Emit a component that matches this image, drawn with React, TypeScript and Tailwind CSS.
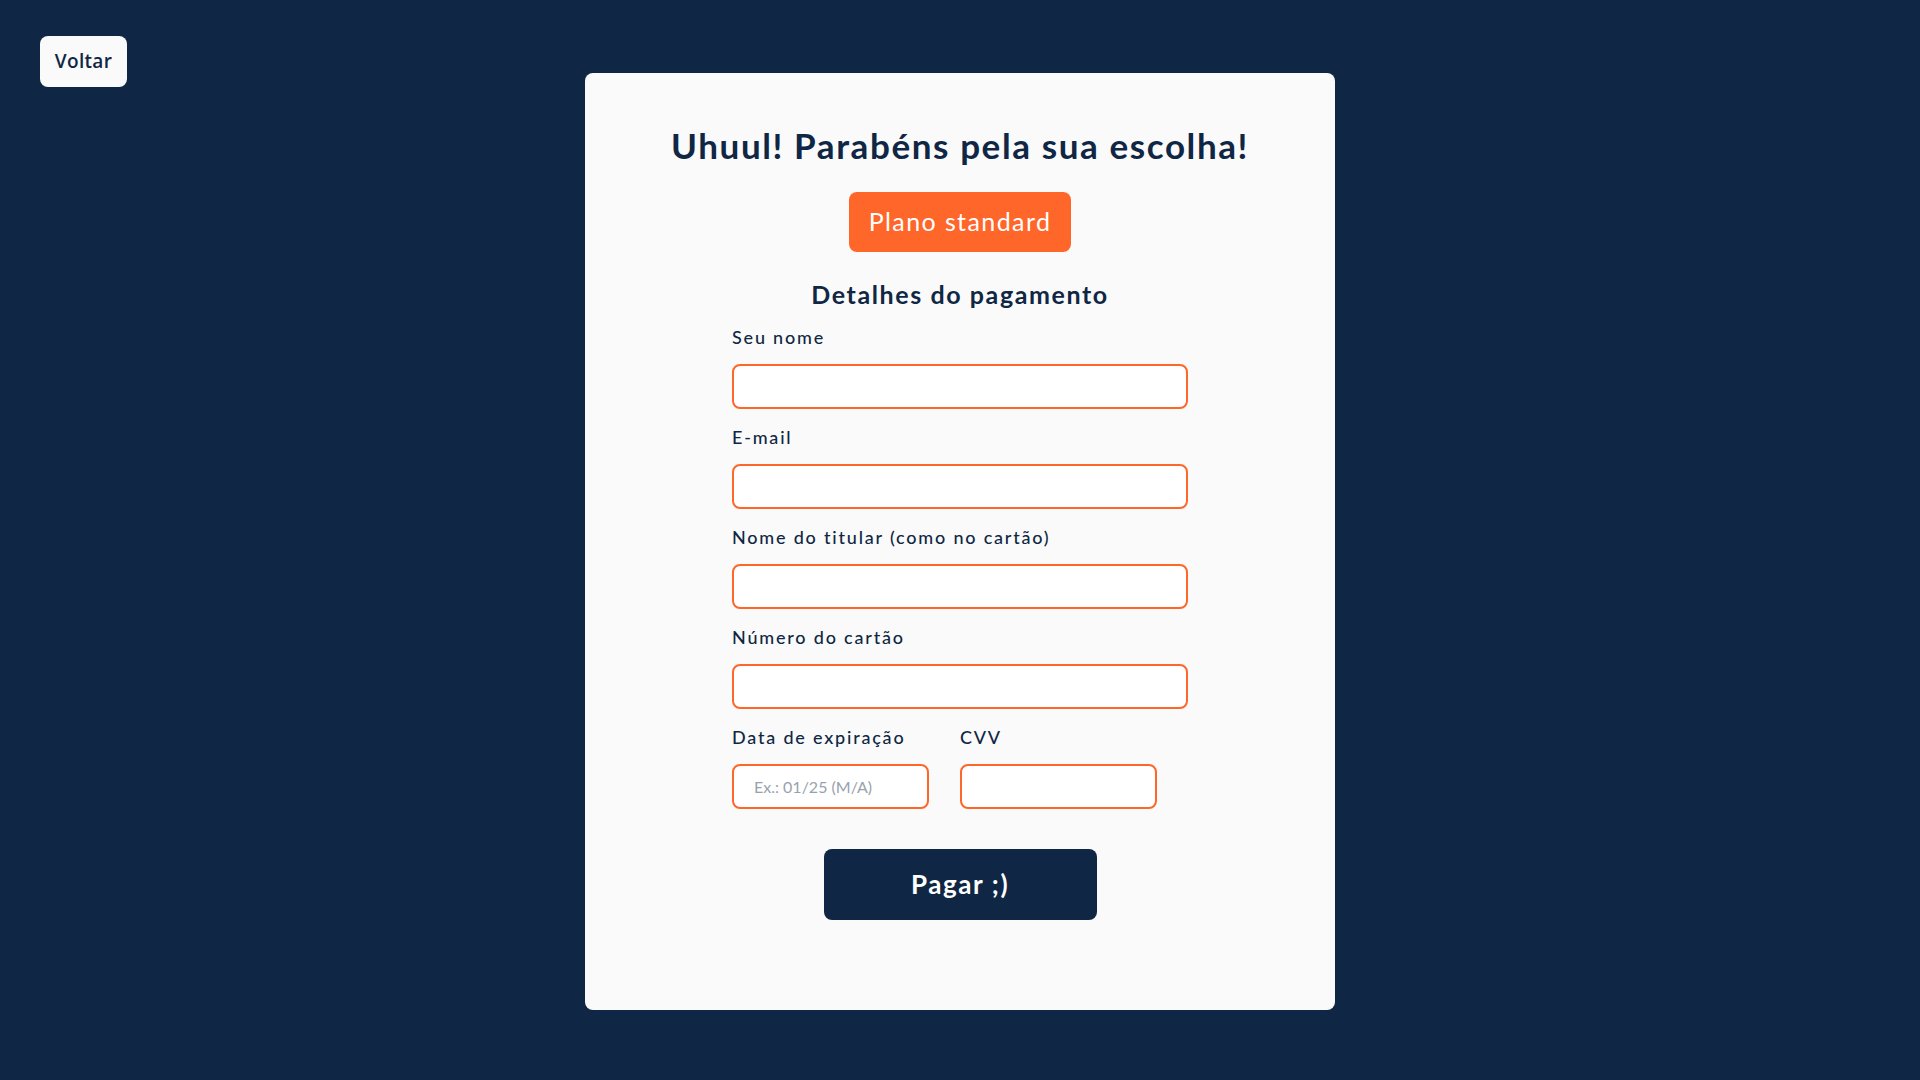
import { useState } from 'react'

const fields = [
  { id: 'nome', label: 'Seu nome', type: 'text' },
  { id: 'email', label: 'E-mail', type: 'email' },
  { id: 'titular', label: 'Nome do titular (como no cartão)', type: 'text' },
  { id: 'cartao', label: 'Número do cartão', type: 'text' },
]

const inputClass =
  'w-full h-[45px] rounded-[8px] border-2 border-[#ff6629] bg-white px-[20px] text-[16px] text-[#0f2744] placeholder:text-[#98a2ae] focus:outline-none'

const labelClass = 'block mb-[15px] text-[18px] leading-[24px] font-medium tracking-[1.8px]'

export default function App() {
  const [form, setForm] = useState<Record<string, string>>({})

  const update = (id: string, value: string) => setForm(prev => ({ ...prev, [id]: value }))

  return (
    <div className="min-h-screen bg-[#0f2744] grid grid-cols-[1fr_750px_1fr] font-['Lato','Open_Sans',sans-serif] text-[#0f2744]">
      <div className="pl-[40px] pt-[36px]">
        <button className="h-[51px] w-[87px] rounded-[8px] bg-[#fafafa] text-[19px] font-semibold tracking-[0.3px] font-['Open_Sans',sans-serif] text-[#0f2744]">
          Voltar
        </button>
      </div>

      <div className="pt-[73px] pb-[70px]">
        <div className="h-[937px] rounded-[8px] bg-[#fafafa] pt-[52px] flex flex-col items-center">
          <h1 className="text-[35px] leading-[40px] font-bold tracking-[1.6px]">Uhuul! Parabéns pela sua escolha!</h1>

          <div className="mt-[27px] h-[60px] w-[222px] rounded-[8px] bg-[#ff6629] text-white text-[25px] tracking-[1.4px] flex items-center justify-center">
            Plano standard
          </div>

          <h2 className="mt-[27px] text-[25px] leading-[30px] font-bold tracking-[1.6px]">Detalhes do pagamento</h2>

          <form className="mt-[16px] w-[456px] flex flex-col gap-[16px]" onSubmit={e => e.preventDefault()}>
            {fields.map(f => (
              <div key={f.id}>
                <label htmlFor={f.id} className={labelClass}>
                  {f.label}
                </label>
                <input
                  id={f.id}
                  type={f.type}
                  value={form[f.id] || ''}
                  onChange={e => update(f.id, e.target.value)}
                  className={inputClass}
                />
              </div>
            ))}

            <div className="flex gap-[31px]">
              <div className="w-[197px]">
                <label htmlFor="validade" className={labelClass}>
                  Data de expiração
                </label>
                <input
                  id="validade"
                  placeholder="Ex.: 01/25 (M/A)"
                  value={form.validade || ''}
                  onChange={e => update('validade', e.target.value)}
                  className={inputClass}
                />
              </div>
              <div className="w-[197px]">
                <label htmlFor="cvv" className={labelClass}>
                  CVV
                </label>
                <input
                  id="cvv"
                  value={form.cvv || ''}
                  onChange={e => update('cvv', e.target.value)}
                  className={inputClass}
                />
              </div>
            </div>

            <button
              type="submit"
              className="self-center mt-[24px] h-[71px] w-[273px] rounded-[8px] bg-[#0f2744] text-white text-[26px] font-bold tracking-[1.6px]"
            >
              Pagar ;)
            </button>
          </form>
        </div>
      </div>

      <div />
    </div>
  )
}
